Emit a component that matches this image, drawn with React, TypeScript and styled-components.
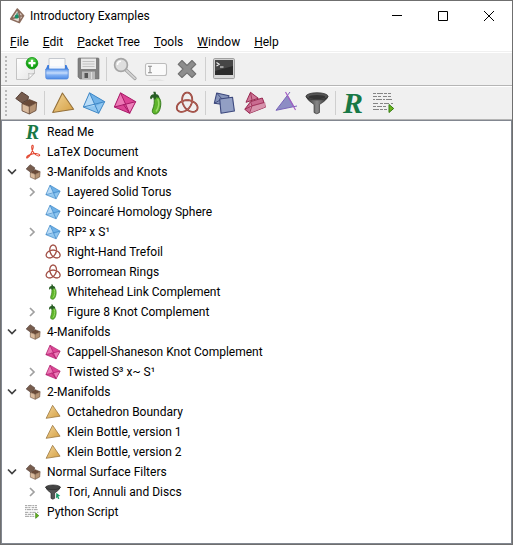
import React, { useState } from "react";
import styled, { createGlobalStyle } from "styled-components";

const GlobalStyle = createGlobalStyle`
  * { box-sizing: border-box; }
  body {
    margin: 0;
    background: #fff;
    color: #000;
    font: 12px/20px Roboto, "Open Sans", sans-serif;
  }
  button { font: inherit; color: inherit; border: 0; padding: 0; background: transparent; }
`;

/* ---------- icons, drawn on a 24-unit grid ---------- */

const Glyph = styled.svg<{ $size: number }>`
  display: block;
  flex: none;
  overflow: visible;
  width: ${(p) => p.$size}px;
  height: ${(p) => p.$size}px;
`;

const trefoil =
  Array.from({ length: 91 }, (_, i) => {
    const t = (i / 90) * Math.PI * 2;
    const x = 12.2 + 3.8 * (Math.sin(t) + 2 * Math.sin(2 * t));
    const y = 13 + 3.8 * (Math.cos(t) - 2 * Math.cos(2 * t));
    return `${i ? "L" : "M"}${x.toFixed(2)} ${y.toFixed(2)}`;
  }).join("") + "Z";

const art = {
  newFile: (
    <>
      <defs>
        <linearGradient id="paper" x2="1" y2="1"><stop stopColor="#fff" /><stop offset="1" stopColor="#e4e4e4" /></linearGradient>
        <radialGradient id="plus" cy=".3"><stop stopColor="#6fe060" /><stop offset="1" stopColor="#12a012" /></radialGradient>
      </defs>
      <path d="M2.5 1.5H20.5V16L14 22.5H2.5Z" fill="url(#paper)" stroke="#c4c4c4" />
      <path d="M14 22.5C15.5 20 15 18 14.5 16.5C17 17.5 19 17 20.5 16Z" fill="#fff" stroke="#b0b0b0" strokeWidth=".8" />
      <circle cx="18" cy="6.2" r="5.8" fill="url(#plus)" stroke="#119a11" strokeWidth=".8" />
      <path d="M18 2.7V9.7M14.5 6.2H21.5" stroke="#fff" strokeWidth="2.2" />
    </>
  ),
  open: (
    <>
      <defs><linearGradient id="tray" x2="0" y2="1"><stop stopColor="#5b97ee" /><stop offset=".4" stopColor="#c6dcfb" /><stop offset=".6" stopColor="#82b1f4" /><stop offset="1" stopColor="#4d8ae6" /></linearGradient></defs>
      <path d="M4 1.5H20V12H4Z" fill="#fbfbfb" stroke="#c4c8ce" />
      <path d="M2.5 8H4V12H20V8H21.5L23.5 13H.5Z" fill="#3e7ddd" />
      <path d="M5 9H19V13H5Z" fill="#f0f5fd" />
      <path d="M.8 12H23.2V20.5Q23.2 22 21.5 22H2.5Q.8 22 .8 20.5Z" fill="url(#tray)" stroke="#4c85da" strokeWidth=".8" />
    </>
  ),
  save: (
    <>
      <path d="M2 2Q2 1 3 1H22Q23 1 23 2V22H4L2 20Z" fill="#808080" stroke="#6d6d6d" strokeWidth=".6" />
      <path d="M5 1.5H20V12H5Z" fill="#e9e9e9" />
      <path d="M6.5 4.5H18.5M6.5 7H18.5M6.5 9.5H18.5" stroke="#bdbdbd" strokeWidth=".9" />
      <path d="M6 14.5H19V22H6Z" fill="#b9b9b9" />
      <path d="M8.5 16H12V21H8.5Z" fill="#555" />
      <path d="M15.5 15V22" stroke="#ddd" />
    </>
  ),
  find: (
    <>
      <path d="M13 13L22 21.5" stroke="#999" strokeWidth="3.2" strokeLinecap="round" />
      <path d="M13 13L22 21.5" stroke="#d2d2d2" strokeWidth="1.8" strokeLinecap="round" />
      <circle cx="8" cy="8" r="6.4" fill="#dedede" stroke="#a5a5a5" strokeWidth="1.7" />
      <path d="M4.5 8A3.8 3.8 0 0 1 8 4.2" stroke="#fff" strokeWidth="1.5" fill="none" />
    </>
  ),
  rename: (
    <>
      <rect x="1.5" y="6.5" width="21" height="12" rx="2" fill="#fafafa" stroke="#bcbcbc" strokeWidth="1.1" />
      <path d="M4 9.3H8M6 9.3V15.8M4 15.8H8" stroke="#8d8d8d" strokeWidth="1.1" fill="none" />
      <path d="M3 23.5Q12 21.5 21 23.5" fill="#d6d6d6" />
    </>
  ),
  remove: (
    <path d="M7 3.5L12 8.5L17 3.5L20.8 7.3L16 12L20.8 16.8L17 20.5L12 15.8L7 20.5L3.2 16.8L8 12L3.2 7.3Z" fill="#8d8d8d" stroke="#707070" strokeWidth="1.1" strokeLinejoin="round" />
  ),
  terminal: (
    <>
      <rect x="1.6" y="1.6" width="20.8" height="20" rx="1" fill="#d7d7d7" stroke="#999" />
      <path d="M3 3H21V18H3Z" fill="#2b2b2b" />
      <path d="M3 3H21V9L3 14Z" fill="#464646" />
      <path d="M4.5 5.5L7.2 7.3L4.5 9M8 10H11.5" stroke="#f2f2f2" strokeWidth="1.1" fill="none" />
    </>
  ),
  box: (
    <>
      <path d="M8 12.5L15.3 8.5L22.7 11.5L15.3 15.5Z" fill="#6a4a38" />
      <path d="M8 12.5L15.3 15.5V23L8 19.8Z" fill="#dabb9e" />
      <path d="M15.3 15.5L22.7 11.5L22 19.5L15.3 23Z" fill="#b59374" />
      <path d="M8 12.5L15.3 8.5L22.7 11.5L22 19.5L15.3 23L8 19.8ZM15.3 15.5V23M8 12.5L15.3 15.5L22.7 11.5" fill="none" stroke="#5d402e" strokeWidth=".8" strokeLinejoin="round" />
      <path d="M7.7 1L14.5 5.5L14 8.5L8 12L1.8 7.5Z" fill="#765c4e" stroke="#4e382e" strokeWidth=".9" strokeLinejoin="round" />
    </>
  ),
  triangle: (
    <>
      <defs><linearGradient id="gold" x2="1" y2="1"><stop stopColor="#f2d59a" /><stop offset="1" stopColor="#d5a043" /></linearGradient></defs>
      <path d="M11.4 2L22.6 18.3L1.7 21.5Z" fill="url(#gold)" stroke="#94703a" strokeWidth="1.1" strokeLinejoin="round" />
    </>
  ),
  blueTet: (
    <>
      <path d="M7.5 1.8L22.7 10.7L16.7 22.3L1.3 16Z" fill="#8fc6f0" />
      <path d="M7.5 1.8L13.5 15L1.3 16Z" fill="#b9dcf7" />
      <path d="M7.5 1.8L22.7 10.7L13.5 15Z" fill="#70b2e8" />
      <path d="M7.5 1.8L22.7 10.7L16.7 22.3L1.3 16ZM7.5 1.8L16.7 22.3M1.3 16L22.7 10.7" fill="none" stroke="#3f88c6" strokeWidth="1" strokeLinejoin="round" />
    </>
  ),
  pinkTet: (
    <>
      <path d="M7.5 1.8L22.7 10.7L16.7 22.3L1.3 16Z" fill="#dc4595" />
      <path d="M7.5 1.8L12.5 13.4L1.3 16Z" fill="#ec78b5" />
      <path d="M12.5 13.4L22.7 10.7L16.7 22.3Z" fill="#ed80ba" />
      <path d="M7.5 1.8L22.7 10.7L16.7 22.3L1.3 16ZM7.5 1.8L16.7 22.3M1.3 16L22.7 10.7M10 13L16.7 22.3" fill="none" stroke="#a91b68" strokeWidth="1" strokeLinejoin="round" />
    </>
  ),
  pea: (
    <>
      <path d="M10 6C14.5 4 17 8 16.8 13C16.5 18.5 14.5 22.8 11.5 23C8.6 23.2 7.6 20.6 8.8 18C10.3 14.5 10.6 10 10 7.5Z" fill="#5fb52c" stroke="#2f7518" strokeWidth=".9" />
      <path d="M13.8 8C15.5 12 14.5 17 12 20.5" fill="none" stroke="#9bdc68" strokeWidth="1.4" />
      <path d="M6 7C6 4 8.5 2.8 10 3.2L9.2 .8L11.5 .8L12.2 3.2C14 3 15.5 5 15.5 7L12.5 6.3L11 9L9 6.3L7 8.5Z" fill="#285d25" />
    </>
  ),
  knot: (
    <>
      <path d={trefoil} fill="none" stroke="#913b32" strokeWidth="1.8" />
      <path d={trefoil} fill="none" stroke="#c77b70" strokeWidth=".6" />
    </>
  ),
  squares: (
    <>
      <path d="M4.7 2L17 4.7L14.5 14L2.3 12.3Z" fill="#8795bb" stroke="#3b477c" strokeWidth="1.1" strokeLinejoin="round" />
      <path d="M4.7 2L10 8L2.3 12.3" fill="none" stroke="#3b477c" strokeWidth=".9" />
      <path d="M7.7 8L20.5 6.2L22.4 20L9 22.2Z" fill="#929fc4" stroke="#3b477c" strokeWidth="1.1" strokeLinejoin="round" />
    </>
  ),
  prisms: (
    <>
      <path d="M7.5 1.3L15.3 7.3L3 11.3Z" fill="#cf7898" stroke="#982850" strokeLinejoin="round" />
      <path d="M7.5 1.3L9 9.3" stroke="#982850" strokeWidth=".8" />
      <path d="M7.5 10.7L19.3 7L22.7 16L6.5 22.3L1.8 18.3Z" fill="#c96b90" stroke="#982850" strokeLinejoin="round" />
      <path d="M7.5 10.7L9.5 15.5L22.7 11.5V16L6.5 22.3Z" fill="#dba0b6" opacity=".75" />
      <path d="M1.8 18.3L9 14.8L21 11.5M9 14.8L6.5 22.3M7.5 10.7L9 14.8" fill="none" stroke="#982850" strokeWidth=".8" />
    </>
  ),
  angle: (
    <>
      <path d="M13.7 4L2 19.3L20.5 15.6Z" fill="#8d8dc4" />
      <path d="M16 1L2 19.3L23 15" fill="none" stroke="#7a64ba" strokeWidth="1" />
      <path d="M11.5 1L21.5 19" stroke="#a257c1" strokeWidth="1.1" />
    </>
  ),
  funnel: (
    <>
      <defs><linearGradient id="metal"><stop stopColor="#303030" /><stop offset=".5" stopColor="#888" /><stop offset="1" stopColor="#272727" /></linearGradient></defs>
      <path d="M1 5.5Q2 9 9 13.5V21.5Q11.7 24 14.5 21.5V13.5Q22 9 23 5.5Z" fill="url(#metal)" stroke="#292929" strokeWidth=".6" />
      <ellipse cx="12" cy="5.3" rx="11" ry="3.6" fill="#555" stroke="#292929" strokeWidth=".7" />
      <ellipse cx="12" cy="6" rx="8.5" ry="2" fill="#343434" />
    </>
  ),
  letterR: (
    <text x="1" y="22" fill="#187846" fontFamily="Liberation Serif, serif" fontSize="30" fontWeight="bold" fontStyle="italic">R</text>
  ),
  script: (
    <>
      <g fill="none" stroke="#858585" strokeWidth="1.2">
        <path d="M0 2.5H19" strokeDasharray="3 1 6 1 3 1" />
        <path d="M0 5.5H20" strokeDasharray="4 1 3 2" />
        <path d="M0 8.5H19" strokeDasharray="2 1 6 1" />
        <path d="M0 12.5H20" strokeDasharray="5 2 3 1" />
        <path d="M0 15.5H14" strokeDasharray="3 1 5 1" />
        <path d="M0 18.5H14" strokeDasharray="6 1 3 1" />
      </g>
      <path d="M16 13.5L20.7 17.5L16 21.5Z" fill="#6bb51c" stroke="#347c14" />
    </>
  ),
  pdf: (
    <path d="M11 2C14 1 11.5 11 8 16C4.5 21.5 2 22 2.5 20C3.5 16.5 13 13.5 18.5 14.5C23 15.2 23 18 20 18C15.5 17.5 9.5 10 10 4.5C10.1 3 10.4 2.2 11 2Z" fill="none" stroke="#e2442d" strokeWidth="1.6" strokeLinejoin="round" />
  ),
  funnelGo: (
    <>
      <path d="M1 4.5Q2 9 9 13.5V21.5Q11.7 24 14.5 21.5V13.5Q22 9 23 4.5Z" fill="#555" stroke="#292929" />
      <ellipse cx="12" cy="5" rx="11" ry="3.5" fill="#444" stroke="#292929" />
      <path d="M17 13L23 18L20 18.5L21.5 22L19.5 22.5L18.5 20L16.5 21.5Z" fill="#189b68" />
    </>
  ),
  app: (
    <>
      <path d="M12.5 1.5L22 11.5L15.5 22L2.5 16.5Z" fill="#e6dad2" />
      <path d="M12.5 6L17 15L7 15.5Z" fill="#5c9c88" />
      <path d="M12.5 1.5L22 11.5L15.5 22L2.5 16.5ZM12.5 1.5L16.5 12L15.5 22M2.5 16.5L16 12.5L22 11.5" fill="none" stroke="#8b6c5d" strokeWidth="2.3" strokeLinejoin="round" />
      <circle cx="11.5" cy="13" r="2.8" fill="#159068" />
    </>
  ),
};

type IconName = keyof typeof art;

const Icon = ({ name, size = 24 }: { name: IconName; size?: number }) => (
  <Glyph $size={size} viewBox="0 0 24 24" aria-hidden="true">{art[name]}</Glyph>
);

/* ---------- window chrome ---------- */

const Window = styled.main`
  display: flex;
  flex-direction: column;
  min-height: 100vh;
  border: 1px solid #6f6f6f;
`;

const TitleBar = styled.header`
  display: flex;
  align-items: center;
  height: 29px;
  padding-left: 8px;
`;

const Title = styled.h1`
  flex: 1;
  margin: 0 0 0 5px;
  font-size: 12px;
  font-weight: 400;
`;

const WindowButton = styled.button`
  display: grid;
  place-items: center;
  width: 46px;
  height: 29px;
  &:hover { background: #e5e5e5; }
`;

const MenuBar = styled.nav`
  display: flex;
  height: 22px;
  padding: 2px 0 0 2px;
  border-bottom: 1px solid #f0f0f0;
`;

const MenuButton = styled.button`
  padding: 0 7px;
  white-space: nowrap;
  &:hover { background: #e5f3ff; }
`;

const ToolbarRow = styled.div`
  display: flex;
  align-items: center;
  height: 34px;
  padding-left: 4px;
  background: #f0f0f0;
  border-top: 1px solid #fff;
  border-bottom: 1px solid #b5b5b5;
`;

const Grip = styled.span`
  width: 2px;
  height: 26px;
  margin-right: 4px;
  background: repeating-linear-gradient(#b8b8b8 0 2px, transparent 2px 4px);
`;

const ToolButton = styled.button`
  width: 31px;
  height: 32px;
  padding: 4px 4px 4px 3px;
  &:hover { background: #e0edf8; }
`;

const Divider = styled.span`
  width: 1px;
  height: 24px;
  margin: 0 3px 0 2px;
  background: #cfcfcf;
`;

/* ---------- packet tree ---------- */

const TreePane = styled.section`
  flex: 1;
  padding-top: 1px;
  border: 1px solid #828790;
  background: #fff;
`;

const Branch = styled.ul<{ $nested?: boolean }>`
  list-style: none;
  margin: 0;
  padding: 0 0 0 ${(p) => (p.$nested ? 20 : 0)}px;
`;

const Row = styled.div`
  display: flex;
  align-items: center;
  height: 20px;
  padding-left: 3px;
  white-space: nowrap;
`;

const Expander = styled.button`
  display: grid;
  place-items: center;
  width: 13px;
  height: 20px;
`;

const IconSlot = styled.span`
  margin: 0 6px 0 7px;
`;

const Spacer = styled.span`
  width: 13px;
`;

type Packet = { label: string; icon: IconName; open?: boolean; children?: Packet[]; folded?: boolean };

const packets: Packet[] = [
  { label: "Read Me", icon: "letterR" },
  { label: "LaTeX Document", icon: "pdf" },
  {
    label: "3-Manifolds and Knots", icon: "box", open: true,
    children: [
      { label: "Layered Solid Torus", icon: "blueTet", folded: true },
      { label: "Poincaré Homology Sphere", icon: "blueTet" },
      { label: "RP² x S¹", icon: "blueTet", folded: true },
      { label: "Right-Hand Trefoil", icon: "knot" },
      { label: "Borromean Rings", icon: "knot" },
      { label: "Whitehead Link Complement", icon: "pea" },
      { label: "Figure 8 Knot Complement", icon: "pea", folded: true },
    ],
  },
  {
    label: "4-Manifolds", icon: "box", open: true,
    children: [
      { label: "Cappell-Shaneson Knot Complement", icon: "pinkTet" },
      { label: "Twisted S³ x~ S¹", icon: "pinkTet", folded: true },
    ],
  },
  {
    label: "2-Manifolds", icon: "box", open: true,
    children: [
      { label: "Octahedron Boundary", icon: "triangle" },
      { label: "Klein Bottle, version 1", icon: "triangle" },
      { label: "Klein Bottle, version 2", icon: "triangle" },
    ],
  },
  {
    label: "Normal Surface Filters", icon: "box", open: true,
    children: [{ label: "Tori, Annuli and Discs", icon: "funnelGo", folded: true }],
  },
  { label: "Python Script", icon: "script" },
];

const Chevron = ({ down }: { down: boolean }) => (
  <Glyph $size={12} viewBox="0 0 12 12" aria-hidden="true">
    <path d={down ? "M2 3.5L6 7.5L10 3.5" : "M4 2L8 6L4 10"} fill="none" stroke={down ? "#404040" : "#a0a0a0"} strokeWidth="1.7" />
  </Glyph>
);

const TreeItem = ({ packet }: { packet: Packet }) => {
  const [open, setOpen] = useState(!!packet.open);
  const expandable = packet.folded || !!packet.children;
  return (
    <li role="treeitem" aria-expanded={expandable ? open : undefined}>
      <Row>
        {expandable ? (
          <Expander aria-label={`Toggle ${packet.label}`} onClick={() => setOpen(!open)}>
            <Chevron down={open} />
          </Expander>
        ) : (
          <Spacer />
        )}
        <IconSlot><Icon name={packet.icon} size={16} /></IconSlot>
        <span>{packet.label}</span>
      </Row>
      {open && packet.children && (
        <Branch role="group" $nested>
          {packet.children.map((p) => <TreeItem key={p.label} packet={p} />)}
        </Branch>
      )}
    </li>
  );
};

type Tool = [IconName, string] | null;

const fileTools: Tool[] = [
  ["newFile", "New"], ["open", "Open"], ["save", "Save"], null,
  ["find", "View"], ["rename", "Rename"], ["remove", "Delete"], null,
  ["terminal", "Python console"],
];

const packetTools: Tool[] = [
  ["box", "New container"], null,
  ["triangle", "New 2-manifold"], ["blueTet", "New 3-manifold"], ["pinkTet", "New 4-manifold"],
  ["pea", "New SnapPea triangulation"], ["knot", "New link"], null,
  ["squares", "New normal surfaces"], ["prisms", "New normal hypersurfaces"],
  ["angle", "New angle structures"], ["funnel", "New filter"], null,
  ["letterR", "New text"], ["script", "New script"],
];

const Toolbar = ({ label, tools }: { label: string; tools: Tool[] }) => (
  <ToolbarRow role="toolbar" aria-label={label}>
    <Grip />
    {tools.map((tool, i) =>
      tool ? (
        <ToolButton key={i} aria-label={tool[1]}><Icon name={tool[0]} /></ToolButton>
      ) : (
        <Divider key={i} />
      )
    )}
  </ToolbarRow>
);

const menus = ["File", "Edit", "Packet Tree", "Tools", "Window", "Help"];

export default function App() {
  return (
    <>
      <GlobalStyle />
      <Window>
        <TitleBar>
          <Icon name="app" size={16} />
          <Title>Introductory Examples</Title>
          <WindowButton aria-label="Minimize">
            <Glyph $size={12} viewBox="0 0 12 12"><path d="M1 5.5H11" stroke="#000" /></Glyph>
          </WindowButton>
          <WindowButton aria-label="Maximize">
            <Glyph $size={12} viewBox="0 0 12 12"><path d="M1.5 1.5H10.5V10.5H1.5Z" fill="none" stroke="#000" /></Glyph>
          </WindowButton>
          <WindowButton aria-label="Close">
            <Glyph $size={12} viewBox="0 0 12 12"><path d="M1 1L11 11M11 1L1 11" stroke="#000" /></Glyph>
          </WindowButton>
        </TitleBar>
        <MenuBar aria-label="Main menu">
          {menus.map((m) => (
            <MenuButton key={m}><u>{m[0]}</u>{m.slice(1)}</MenuButton>
          ))}
        </MenuBar>
        <Toolbar label="File and edit" tools={fileTools} />
        <Toolbar label="New packets" tools={packetTools} />
        <TreePane aria-label="Packets">
          <Branch role="tree">
            {packets.map((p) => <TreeItem key={p.label} packet={p} />)}
          </Branch>
        </TreePane>
      </Window>
    </>
  );
}
